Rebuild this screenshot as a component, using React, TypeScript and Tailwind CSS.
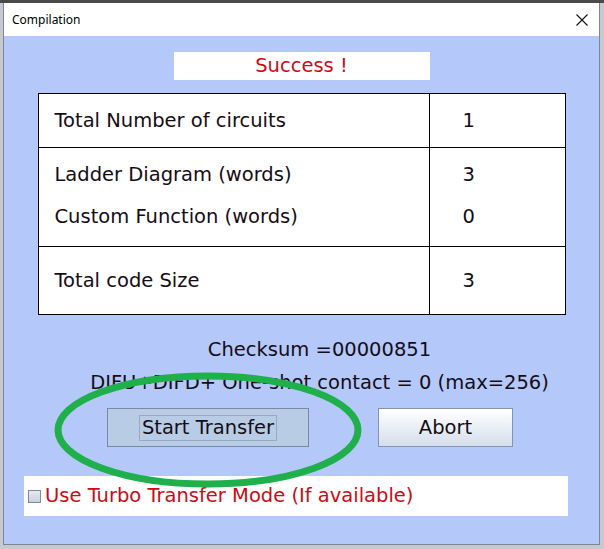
import React from "react";

const rows = [
  { h: "h-[54px]", pad: "", items: [["Total Number of circuits", "1"]] },
  {
    h: "h-[99px]",
    pad: "pb-[3px]",
    items: [
      ["Ladder Diagram (words)", "3"],
      ["Custom Function (words)", "0"],
    ],
  },
  { h: "h-[67px]", pad: "", items: [["Total code Size", "3"]], last: true },
];

export default function App() {
  return (
    <div className="relative w-[604px] h-[549px] overflow-hidden bg-[#c6cad0] font-['DejaVu_Sans',sans-serif]">
      {/* strip of the app behind the dialog */}
      <div className="h-[3px] bg-[#4a4a4a]" />

      <div className="ml-[3px] w-[597px] h-[542px] flex flex-col border-x border-b border-[#7c8896]">
        {/* title bar */}
        <div className="h-[33px] bg-white flex items-center justify-between pl-[8px] pr-[10px]">
          <span className="text-[12px] text-black font-['Noto_Sans',sans-serif]">Compilation</span>
          <svg width="12" height="12" viewBox="0 0 12 12" className="mr-[1px]">
            <path d="M0.5 0.5 L11.5 11.5 M11.5 0.5 L0.5 11.5" stroke="#111" strokeWidth="1.1" fill="none" />
          </svg>
        </div>

        {/* content */}
        <div className="flex-1 bg-[#b4c8f9] flex flex-col pt-[16px] text-[#150d15]">
          <div className="self-center w-[256px] h-[28px] bg-white flex items-center justify-center text-[19.5px] text-[#cc0a14]">
            Success !
          </div>

          <div className="mt-[13px] mx-auto w-[528px] border border-black bg-white flex flex-col">
            {rows.map((row, i) => (
              <div key={i} className={`flex ${row.h} ${row.last ? "" : "border-b border-black"}`}>
                <div className={`w-[391px] border-r border-black flex flex-col justify-center gap-[19px] pl-[16px] text-[19.5px] ${row.pad}`}>
                  {row.items.map(([label]) => (
                    <span key={label} className="leading-[23px]">{label}</span>
                  ))}
                </div>
                <div className={`flex-1 flex flex-col justify-center gap-[19px] pl-[33px] text-[19.5px] ${row.pad}`}>
                  {row.items.map(([label, v]) => (
                    <span key={label} className="leading-[23px]">{v}</span>
                  ))}
                </div>
              </div>
            ))}
          </div>

          <div className="mt-[18px] pl-[36px] text-center text-[19.5px] leading-[33px]">
            <div>Checksum =00000851</div>
            <div>DIFU+DIFD+ One-shot contact = 0 (max=256)</div>
          </div>

          <div className="mt-[9px] flex pl-[103px] gap-[69px]">
            <button className="w-[202px] h-[39px] bg-[#b8cce6] border border-[#7788a8] flex items-center justify-center text-[19.5px] text-[#150d15]">
              <span className="border border-[#98a8c4] px-[2px] leading-[24px]">Start Transfer</span>
            </button>
            <button className="w-[135px] h-[39px] bg-gradient-to-b from-white to-[#d5deec] border border-[#8494ac] flex items-center justify-center text-[19.5px] text-[#150d15]">
              Abort
            </button>
          </div>

          <div className="mt-[29px] ml-[20px] w-[544px] h-[40px] bg-white flex items-center pl-[4px]">
            <span className="w-[13px] h-[13px] border border-[#7f8a99] bg-gradient-to-b from-[#e6eaf0] to-[#c8d0dc]" />
            <span className="ml-[4px] text-[19.5px] text-[#cc0a14]">Use Turbo Transfer Mode (If available)</span>
          </div>
        </div>
      </div>

      {/* green highlight drawn over the dialog */}
      <svg className="absolute left-0 top-0 pointer-events-none" width="604" height="549">
        <ellipse cx="208" cy="430" rx="150" ry="54" fill="none" stroke="#20b04b" strokeWidth="7" />
      </svg>
    </div>
  );
}
